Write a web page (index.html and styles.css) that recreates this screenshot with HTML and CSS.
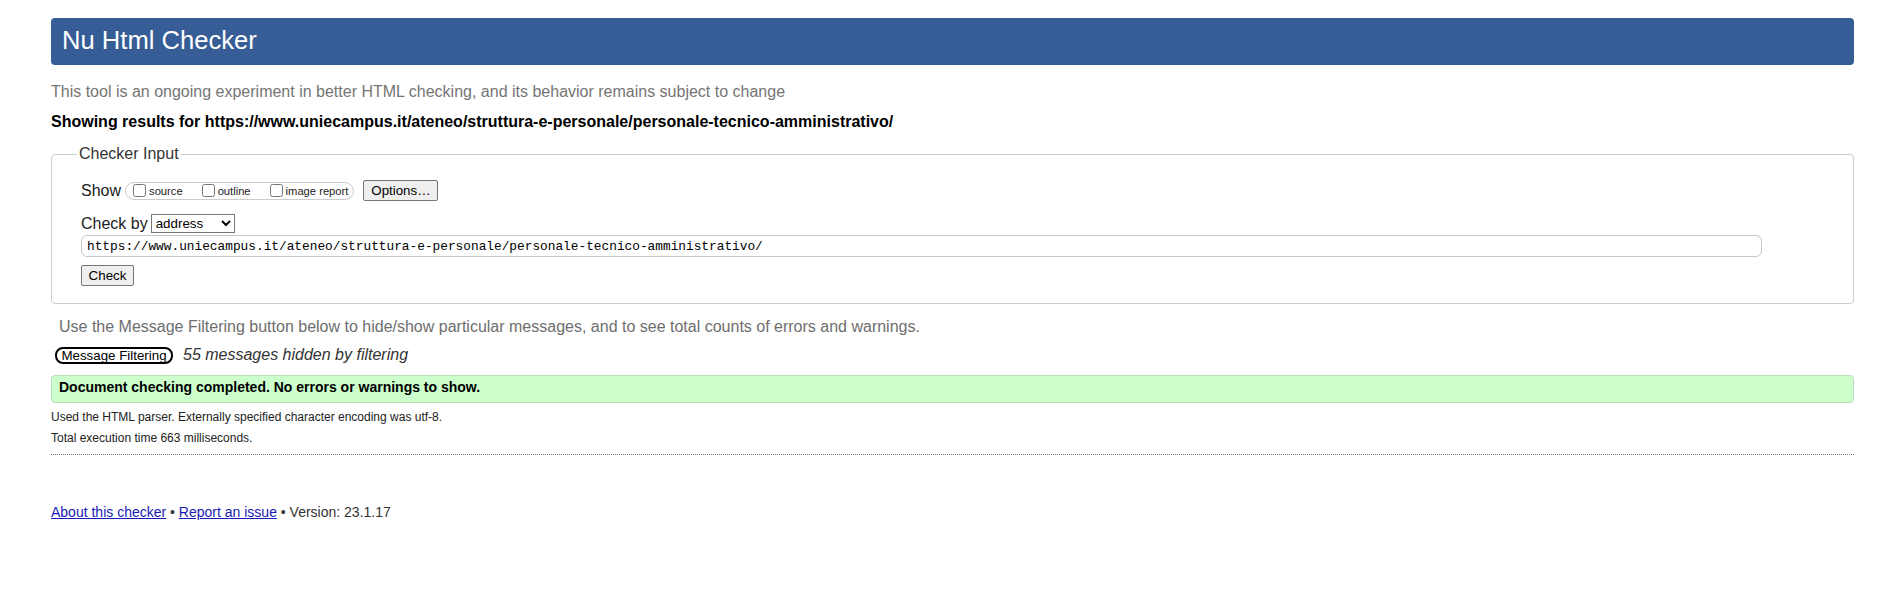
FILE: index.html
```html
<!DOCTYPE html>
<html>

<head>
    <title>Nu Html Checker</title>
    <link rel="stylesheet" href="styles.css">
</head>

<body>
    <h1 class="title">Nu Html Checker</h1>
    <p class="intro">This tool is an ongoing experiment in better HTML checking, and its behavior remains subject to change</p>
    <p class="results-for">Showing results for https://www.uniecampus.it/ateneo/struttura-e-personale/personale-tecnico-amministrativo/</p>

    <form>
        <fieldset class="checker">
            <legend>Checker Input</legend>

            <div class="row show-row">
                <span class="row-label">Show</span>
                <span class="pill">
                    <label class="opt"><input type="checkbox">source</label>
                    <label class="opt"><input type="checkbox">outline</label>
                    <label class="opt"><input type="checkbox">image report</label>
                </span>
                <button type="button" class="btn options">Options…</button>
            </div>

            <div class="row by-row">
                <span class="row-label">Check by</span>
                <select class="by-select">
                    <option>address</option>
                    <option>file upload</option>
                    <option>text input</option>
                </select>
            </div>

            <input type="text" class="url" value="https://www.uniecampus.it/ateneo/struttura-e-personale/personale-tecnico-amministrativo/">

            <button type="button" class="btn check">Check</button>
        </fieldset>
    </form>

    <p class="filter-note">Use the Message Filtering button below to hide/show particular messages, and to see total counts of errors and warnings.</p>
    <div class="filter-row">
        <button type="button" class="filter-btn">Message Filtering</button>
        <em class="hidden-count">55 messages hidden by filtering</em>
    </div>

    <div class="success">Document checking completed. No errors or warnings to show.</div>

    <div class="details">
        <p>Used the HTML parser. Externally specified character encoding was utf-8.</p>
        <p>Total execution time 663 milliseconds.</p>
    </div>

    <p class="footer">
        <a href="#">About this checker</a> • <a href="#">Report an issue</a> • Version: 23.1.17
    </p>
</body>

</html>
```

FILE: styles.css
```css
body {
    font-family: "Liberation Sans", Arial, sans-serif;
    margin: 0;
    padding: 18px 46px 40px 51px;
    background-color: #fff;
    color: #222;
}

.title {
    margin: 0;
    background-color: #365d95;
    color: #fff;
    border-radius: 4px;
    font-size: 25.6px;
    font-weight: normal;
    line-height: 29px;
    padding: 8px 11px 10px;
}

.intro {
    margin: 18px 0 0;
    font-size: 16px;
    line-height: 18px;
    color: #757575;
}

.results-for {
    margin: 12px 0 0;
    font-size: 16px;
    line-height: 18px;
    font-weight: bold;
    color: #000;
}

form {
    margin: 0;
}

.checker {
    margin: 14px 0 0;
    min-width: 0;
    padding: 0 24px 17px 29px;
    border: 1px solid #ccc;
    border-radius: 4px;
}

.checker legend {
    margin-left: -4px;
    padding: 0 2px;
    font-size: 16px;
    line-height: 18px;
    color: #333;
}

.row {
    display: flex;
    align-items: center;
}

.row-label {
    font-size: 16px;
    line-height: 18px;
    color: #222;
}

.show-row {
    margin-top: 17px;
    height: 21px;
}

.show-row .row-label {
    margin-right: 4px;
}

.pill {
    display: inline-flex;
    align-items: center;
    box-sizing: border-box;
    height: 18px;
    padding: 0 5px 0 3px;
    border: 1px solid #ccc;
    border-radius: 9px;
    font-size: 11.2px;
    color: #222;
}

.opt {
    display: flex;
    align-items: center;
    margin-right: 15px;
}

.opt:last-child {
    margin-right: 0;
}

.opt input {
    width: 13px;
    height: 13px;
    margin: 0 3px 0 4px;
}

.btn {
    box-sizing: border-box;
    height: 21px;
    padding: 0 6px;
    font-family: "Liberation Sans", Arial, sans-serif;
    font-size: 13.33px;
    color: #000;
    background-color: #efefef;
    border: 1px solid #767676;
    border-radius: 2px;
}

.options {
    width: 75px;
    margin-left: 9px;
}

.by-row {
    margin-top: 13px;
    height: 19px;
}

.by-row .row-label {
    margin-right: 3px;
}

.by-select {
    box-sizing: border-box;
    width: 84px;
    height: 19px;
    font-family: "Liberation Sans", Arial, sans-serif;
    font-size: 13.33px;
    color: #000;
    background-color: #fff;
    border: 1px solid #767676;
    border-radius: 0;
}

.url {
    display: block;
    box-sizing: border-box;
    width: 1681px;
    height: 22px;
    margin: 2px 0 0;
    padding: 0 5px;
    border: 1px solid #c8c8c8;
    border-radius: 6px;
    font-family: "Liberation Mono", "DejaVu Sans Mono", monospace;
    font-size: 12.8px;
    color: #000;
}

.check {
    display: block;
    width: 53px;
    margin-top: 8px;
}

.filter-note {
    margin: 14px 0 0 8px;
    font-size: 16px;
    line-height: 18px;
    color: #6e6e6e;
}

.filter-row {
    display: flex;
    align-items: center;
    height: 18px;
    margin: 10px 0 0 4px;
}

.filter-btn {
    box-sizing: border-box;
    width: 118px;
    height: 17px;
    padding: 0 4px;
    font-family: "Liberation Sans", Arial, sans-serif;
    font-size: 13.33px;
    line-height: 13px;
    color: #000;
    background: #fff;
    border: 2px solid #000;
    border-radius: 8px;
}

.hidden-count {
    margin-left: 10px;
    font-size: 16px;
    line-height: 18px;
    color: #333;
}

.success {
    margin-top: 11px;
    padding: 4px 7px 8px;
    background-color: #ccffcc;
    border: 1px solid #b9ddb9;
    border-radius: 4px;
    font-size: 14px;
    line-height: 14px;
    font-weight: bold;
    color: #000;
}

.details {
    margin-top: 4px;
    padding-bottom: 5px;
    border-bottom: 1px dotted #777;
    font-size: 12px;
    line-height: 21px;
    color: #222;
}

.details p {
    margin: 0;
}

.footer {
    margin: 49px 0 0;
    font-size: 14px;
    line-height: 16px;
    color: #333;
}

.footer a {
    color: #1a1ab8;
}
```
